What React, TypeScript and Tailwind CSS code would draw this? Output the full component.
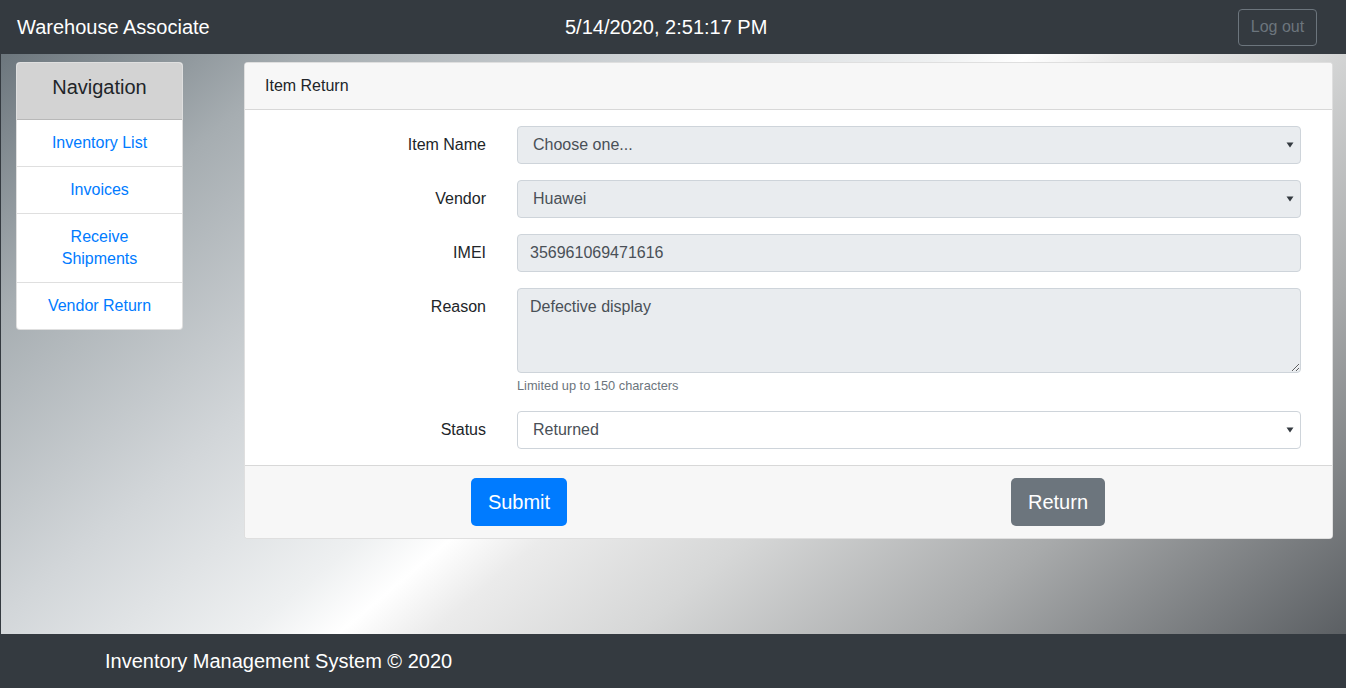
import React from "react";

const Caret = () => (
  <svg width="8" height="6" viewBox="0 0 8 6" className="shrink-0">
    <path d="M0.5 0.5H7.5L4 5.5Z" fill="#343a40" />
  </svg>
);

function SelectBox({ value, disabled }: { value: string; disabled?: boolean }) {
  return (
    <div
      className={`h-[38px] flex-1 flex items-center justify-between rounded border border-[#ced4da] pl-[15px] pr-[6px] text-base leading-6 text-[#495057] ${
        disabled ? "bg-[#e9ecef]" : "bg-white"
      }`}
    >
      <span>{value}</span>
      <Caret />
    </div>
  );
}

function Label({ children }: { children: React.ReactNode }) {
  return (
    <div className="w-[241px] shrink-0 pt-[7px] text-right text-base leading-6 text-[#212529]">
      {children}
    </div>
  );
}

export default function App() {
  const navItems = ["Inventory List", "Invoices", "Receive Shipments", "Vendor Return"];
  return (
    <div className="flex h-screen flex-col font-['Liberation_Sans',Arial,sans-serif]">
      <header className="flex h-[54px] shrink-0 items-center bg-[#343a40] pl-[17px] pr-[29px] text-white">
        <div className="w-[548px] text-[20px] leading-6">Warehouse Associate</div>
        <div className="text-[20px] leading-6">5/14/2020, 2:51:17 PM</div>
        <button className="ml-auto h-[37px] w-[79px] rounded border border-[#6c757d] text-base leading-6 text-[#6c757d]">
          Log out
        </button>
      </header>

      <main className="flex flex-1 items-start gap-[61px] border-l border-[#343a40] bg-[linear-gradient(140deg,#6c767d_0%,#a6adb1_15%,#d2d6d9_33%,#eef0f1_46%,#ffffff_50.5%,#ebebeb_55%,#d6d7d7_65%,#a8aaab_80%,#5b5f63_100%)] pl-[15px] pr-[13px] pt-2">
        <nav className="w-[167px] shrink-0 overflow-hidden rounded border border-[rgba(0,0,0,0.125)] bg-white">
          <div className="border-b border-[rgba(0,0,0,0.125)] bg-[#d3d3d3] pb-5 pt-3 text-center text-[20px] leading-6 text-[#212529]">
            Navigation
          </div>
          {navItems.map((item, i) => (
            <div
              key={item}
              className={`px-[30px] py-3 text-center text-base leading-[22px] text-[#007bff] ${
                i > 0 ? "border-t border-[rgba(0,0,0,0.125)]" : ""
              }`}
            >
              {item}
            </div>
          ))}
        </nav>

        <section className="flex-1 overflow-hidden rounded border border-[rgba(0,0,0,0.125)] bg-white">
          <div className="border-b border-[rgba(0,0,0,0.125)] bg-[#f7f7f7] px-5 py-3 text-base leading-[22px] text-[#212529]">
            Item Return
          </div>
          <div className="flex flex-col gap-4 pb-4 pr-[31px] pt-4">
            <div className="flex gap-[31px]">
              <Label>Item Name</Label>
              <SelectBox value="Choose one..." disabled />
            </div>
            <div className="flex gap-[31px]">
              <Label>Vendor</Label>
              <SelectBox value="Huawei" disabled />
            </div>
            <div className="flex gap-[31px]">
              <Label>IMEI</Label>
              <div className="flex h-[38px] flex-1 items-center rounded border border-[#ced4da] bg-[#e9ecef] px-3 text-base leading-6 text-[#495057]">
                356961069471616
              </div>
            </div>
            <div className="flex gap-[31px]">
              <Label>Reason</Label>
              <div className="flex flex-1 flex-col">
                <textarea
                  readOnly
                  value="Defective display"
                  className="block h-[85px] w-full rounded border border-[#ced4da] bg-[#e9ecef] px-3 py-[6px] text-base leading-6 text-[#495057] outline-none font-['Liberation_Sans',Arial,sans-serif]"
                />
                <div className="mt-1 text-[12.8px] leading-[18px] text-[#6c757d]">
                  Limited up to 150 characters
                </div>
              </div>
            </div>
            <div className="flex gap-[31px]">
              <Label>Status</Label>
              <SelectBox value="Returned" />
            </div>
          </div>
          <div className="flex items-center border-t border-[rgba(0,0,0,0.125)] bg-[#f7f7f7] py-3 pl-[226px]">
            <button className="h-12 w-[96px] rounded-[5px] bg-[#007bff] text-[20px] leading-[30px] text-white">
              Submit
            </button>
            <button className="ml-[444px] h-12 w-[94px] rounded-[5px] bg-[#6c757d] text-[20px] leading-[30px] text-white">
              Return
            </button>
          </div>
        </section>
      </main>

      <footer className="flex h-[54px] shrink-0 items-center bg-[#343a40] pl-[105px] text-[20px] leading-6 text-white">
        Inventory Management System © 2020
      </footer>
    </div>
  );
}
